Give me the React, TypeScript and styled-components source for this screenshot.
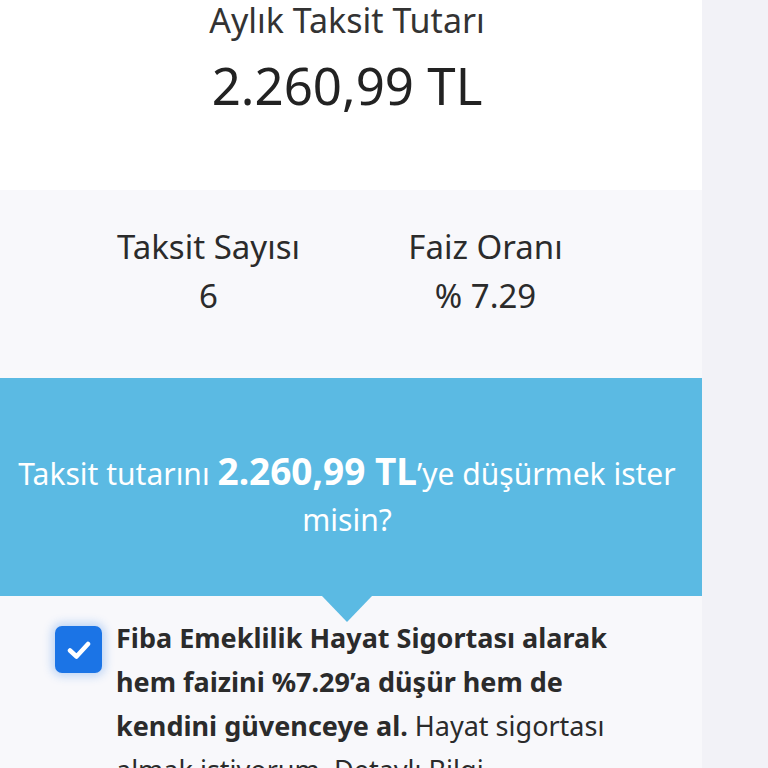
import React from 'react';
import styled, { createGlobalStyle } from 'styled-components';

const GlobalStyle = createGlobalStyle`
  html, body {
    margin: 0;
    padding: 0;
    background: #f2f2f7;
  }
  body {
    font-family: "Noto Sans", "Open Sans", sans-serif;
    color: #2b2b2b;
  }
`;

const Page = styled.div`
  display: flex;
  height: 768px;
  overflow: hidden;
`;

const Main = styled.main`
  width: 702px;
  flex-shrink: 0;
  display: flex;
  flex-direction: column;
  background: #f8f8fb;

  & > section {
    flex-shrink: 0;
  }
`;

const Side = styled.aside`
  flex: 1;
  background: #f2f2f7;
`;

const Summary = styled.section`
  height: 190px;
  background: #ffffff;
  display: flex;
  flex-direction: column;
  align-items: center;
  padding-right: 8px;
`;

const SummaryLabel = styled.div`
  font-size: 34px;
  line-height: 40px;
  color: #333;
`;

const SummaryAmount = styled.div`
  margin-top: 17px;
  font-size: 51px;
  line-height: 56px;
  color: #222;
`;

const Stats = styled.section`
  height: 188px;
  box-sizing: border-box;
  padding: 37px 78px 0 70px;
  display: grid;
  grid-template-columns: 1fr 1fr;
  align-content: start;
`;

const Stat = styled.div`
  display: flex;
  flex-direction: column;
  align-items: center;
  gap: 9px;
  font-size: 33px;
  line-height: 40px;
  color: #2b2b2b;
`;

const Banner = styled.section`
  position: relative;
  height: 218px;
  background: #5bbae3;
  display: flex;
  align-items: center;
  justify-content: center;
  padding: 17px 16px 0 8px;
  box-sizing: border-box;

  &::after {
    content: '';
    position: absolute;
    left: 322px;
    top: 100%;
    border-top: 26px solid #5bbae3;
    border-left: 25px solid transparent;
    border-right: 25px solid transparent;
  }
`;

const BannerText = styled.p`
  margin: 0;
  color: #fff;
  font-size: 30px;
  line-height: 46px;
  text-align: center;

  strong {
    font-size: 37px;
    font-weight: 700;
  }
`;

const Consent = styled.section`
  display: flex;
  align-items: flex-start;
  gap: 14px;
  padding: 30px 0 0 55px;
`;

const CheckBox = styled.span`
  flex-shrink: 0;
  width: 47px;
  height: 47px;
  border-radius: 7px;
  background: #1b74e6;
  box-shadow: 0 0 10px 3px rgba(27, 116, 230, 0.28);
  display: flex;
  align-items: center;
  justify-content: center;
`;

const ConsentText = styled.p`
  margin: -10px 0 0;
  width: 530px;
  font-size: 27px;
  line-height: 44px;
  color: #2b2b2b;

  strong {
    font-weight: 700;
  }
`;

export default function App() {
  return (
    <>
      <GlobalStyle />
      <Page>
        <Main>
          <Summary>
            <SummaryLabel>Aylık Taksit Tutarı</SummaryLabel>
            <SummaryAmount>2.260,99 TL</SummaryAmount>
          </Summary>
          <Stats>
            <Stat>
              <span>Taksit Sayısı</span>
              <span>6</span>
            </Stat>
            <Stat>
              <span>Faiz Oranı</span>
              <span>% 7.29</span>
            </Stat>
          </Stats>
          <Banner>
            <BannerText>
              Taksit tutarını <strong>2.260,99 TL</strong>’ye düşürmek ister misin?
            </BannerText>
          </Banner>
          <Consent>
            <CheckBox>
              <svg width="24" height="20" viewBox="0 0 24 20">
                <path d="M3 10.5 L9.5 16.5 L21 4" fill="none" stroke="#fff" strokeWidth="4.5" strokeLinecap="round" strokeLinejoin="round" />
              </svg>
            </CheckBox>
            <ConsentText>
              <strong>Fiba Emeklilik Hayat Sigortası alarak hem faizini %7.29’a düşür hem de kendini güvenceye al.</strong> Hayat sigortası almak istiyorum. Detaylı Bilgi
            </ConsentText>
          </Consent>
        </Main>
        <Side />
      </Page>
    </>
  );
}
